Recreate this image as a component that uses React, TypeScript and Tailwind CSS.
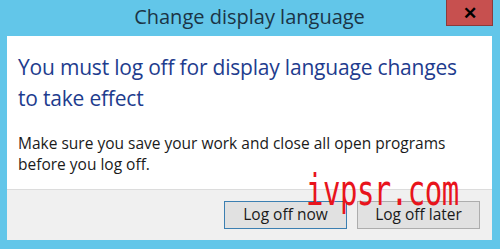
import React from "react";

const font = { fontFamily: '"Open Sans", "Noto Sans", sans-serif' };

const DialogButton = ({ label, focused }: { label: string; focused?: boolean }) => {
  return (
    <button
      className={
        "w-[123px] h-[28px] text-[15.5px] text-[#1a1a1a] bg-[#e1e1e1] border leading-none " +
        (focused ? "border-[#3c7fb1]" : "border-[#adadad]")
      }
    >
      {label}
    </button>
  );
};

export default function App() {
  return (
    <div
      className="w-[500px] h-[249px] bg-[#62c6e9] flex flex-col px-[7px] pr-[8px] pb-[9px] relative overflow-hidden"
      style={font}
    >
      {/* title bar */}
      <div className="h-[36px] flex items-center justify-center relative">
        <p className="text-[20px] text-[#1b3446] -mt-[2px]">Change display language</p>
        <div className="absolute right-[-1px] top-0 w-[47px] h-[26px] bg-[#c7504f] border border-t-0 border-[#8a3b3b] flex items-center justify-center">
          <span className="text-[17px] font-bold text-black leading-none">✕</span>
        </div>
      </div>

      {/* content */}
      <div className="flex-1 bg-white px-[11px] pt-[16px]">
        <p className="text-[21px] leading-[31px] tracking-[-0.2px] text-[#1e3c8e] pr-[10px]">
          You must log off for display language changes to take effect
        </p>
        <p className="text-[15.5px] leading-[21px] text-[#1a1a1a] mt-[19px]">
          Make sure you save your work and close all open programs before you log off.
        </p>
      </div>

      {/* footer */}
      <div className="h-[51px] bg-[#f0f0f0] border-t border-[#dcdcdc] flex justify-end gap-[10px] pr-[12px] pt-[11px]">
        <DialogButton label="Log off now" focused />
        <DialogButton label="Log off later" />
      </div>

      {/* watermark */}
      <p
        className="absolute left-[306px] top-[170px] text-[29px] leading-none text-[#e8141c] tracking-[-0.5px] scale-y-[1.45] origin-top pointer-events-none"
        style={{ fontFamily: '"DejaVu Sans Mono", monospace' }}
      >
        ivpsr.com
      </p>
    </div>
  );
}
